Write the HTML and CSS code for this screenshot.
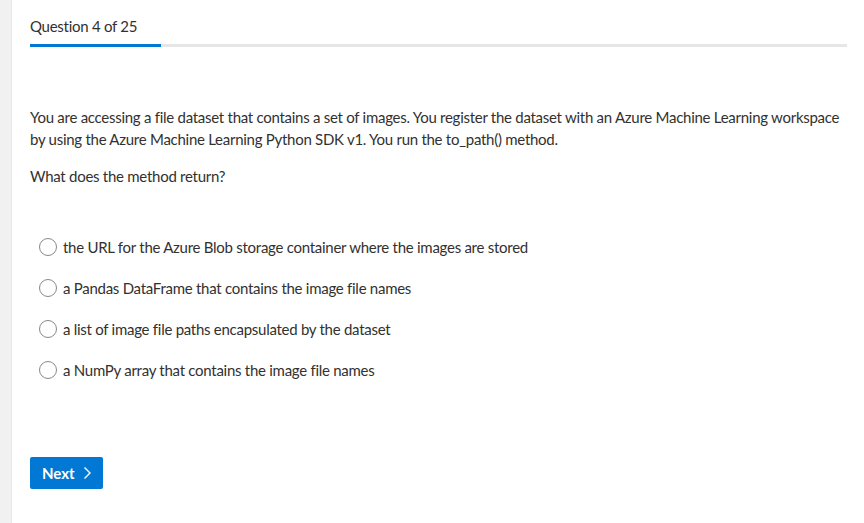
FILE: index.html
```html
<!DOCTYPE html>
<html lang="en">
<head>
<meta charset="utf-8">
<title>Question 4 of 25</title>
<link rel="stylesheet" href="styles.css">
</head>
<body>
<div class="page">
  <div class="rail"></div>
  <main class="content">
    <header class="head">
      <div class="counter">Question 4 of 25</div>
      <div class="track"><div class="fill" style="width:16%"></div></div>
    </header>
    <section class="question">
      <p class="stem">You are accessing a file dataset that contains a set of images. You register the dataset with an Azure Machine Learning workspace by using the Azure Machine Learning Python SDK v1. You run the to_path() method.</p>
      <p class="stem">What does the method return?</p>
    </section>
    <ul class="options">
      <li class="option"><span class="radio"></span><span class="label">the URL for the Azure Blob storage container where the images are stored</span></li>
      <li class="option"><span class="radio"></span><span class="label">a Pandas DataFrame that contains the image file names</span></li>
      <li class="option"><span class="radio"></span><span class="label">a list of image file paths encapsulated by the dataset</span></li>
      <li class="option"><span class="radio"></span><span class="label">a NumPy array that contains the image file names</span></li>
    </ul>
    <div class="actions">
      <button class="next" type="button">Next <svg class="chev" width="10" height="14" viewBox="0 0 10 14"><path d="M2.5 1.5 L8 7 L2.5 12.5" fill="none" stroke="#fff" stroke-width="1.4"/></svg></button>
    </div>
  </main>
</div>
</body>
</html>
```

FILE: styles.css
```css
html, body {
  margin: 0;
  padding: 0;
  background: #ffffff;
}
body {
  font-family: "Lato", "Noto Sans", sans-serif;
  color: #323130;
  font-size: 15px;
  letter-spacing: -0.27px;
}
.page {
  display: flex;
  min-height: 523px;
}
.rail {
  width: 12px;
  flex: 0 0 12px;
  background: #f1f1f1;
  box-shadow: inset -1px 0 0 #e9e9e9;
}
.content {
  flex: 1;
  padding: 15px 17px 0 18px;
}
.counter {
  font-size: 15px;
  line-height: 22px;
  height: 22px;
}
.track {
  margin-top: 7px;
  height: 3px;
  background: #e6e6e6;
}
.fill {
  height: 3px;
  background: #0078d4;
}
.question {
  margin-top: 59px;
}
.stem {
  margin: 0 0 15px 0;
  line-height: 22px;
}
.options {
  list-style: none;
  margin: 49px 0 0 0;
  padding: 0;
  display: flex;
  flex-direction: column;
  gap: 19px;
}
.option {
  display: flex;
  align-items: center;
  height: 22px;
  padding-left: 9px;
}
.radio {
  width: 16px;
  height: 16px;
  border: 1px solid #8a8886;
  border-radius: 50%;
  margin-right: 6px;
  flex: 0 0 auto;
}
.label {
  line-height: 22px;
}
.actions {
  margin-top: 76px;
}
.next {
  display: inline-flex;
  align-items: center;
  gap: 7px;
  height: 32px;
  padding: 0 11px 0 12px;
  border: none;
  border-radius: 2px;
  background: #0078d4;
  color: #ffffff;
  font-family: inherit;
  font-size: 15px;
  font-weight: 700;
  letter-spacing: 0;
}
```
